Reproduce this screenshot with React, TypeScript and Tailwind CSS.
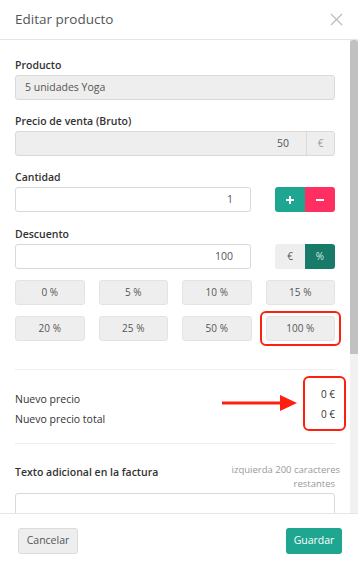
import React from 'react'

const presets = ['0 %', '5 %', '10 %', '15 %', '20 %', '25 %', '50 %', '100 %']

function Label({ children }: { children: React.ReactNode }) {
  return <label className="block text-[10.5px] leading-[16px] font-semibold text-[#333] mb-[2px]">{children}</label>
}

export default function App() {
  return (
    <div
      className="w-[358px] h-[568px] bg-white flex flex-col overflow-hidden text-[#555]"
      style={{ fontFamily: '"Open Sans", "Liberation Sans", sans-serif' }}
    >
      {/* Cabecera */}
      <div className="h-[40px] shrink-0 flex items-center justify-between pl-[15px] pr-[15px] border-b border-[#e5e5e5]">
        <h1 className="text-[13.5px] text-[#555] font-normal">Editar producto</h1>
        <svg width="13" height="13" viewBox="0 0 13 13" className="text-[#bbb]">
          <path d="M1 1 L12 12 M12 1 L1 12" stroke="currentColor" strokeWidth="1.2" fill="none" />
        </svg>
      </div>

      {/* Cuerpo con barra de scroll */}
      <div className="flex-1 flex min-h-0">
        <div className="flex-1 overflow-hidden px-[15px] pt-[17px]">
          <div className="mb-[13px]">
            <Label>Producto</Label>
            <div className="h-[25px] rounded-[3px] border border-[#d9d9d9] bg-[#eeeeee] flex items-center px-[9px] text-[10.5px] text-[#555]">
              5 unidades Yoga
            </div>
          </div>

          <div className="mb-[13px]">
            <Label>Precio de venta (Bruto)</Label>
            <div className="h-[25px] rounded-[3px] border border-[#d9d9d9] bg-[#eeeeee] flex text-[10.5px]">
              <div className="flex-1 flex items-center justify-end pr-[17px]">50</div>
              <div className="w-[28px] border-l border-[#d9d9d9] flex items-center justify-center text-[#999] text-[10px]">€</div>
            </div>
          </div>

          <div className="mb-[14px]">
            <Label>Cantidad</Label>
            <div className="flex items-center justify-between">
              <div className="w-[236px] h-[25px] rounded-[3px] border border-[#d9d9d9] bg-white flex items-center justify-end pr-[17px] text-[10.5px]">
                1
              </div>
              <div className="flex">
                <div className="w-[30px] h-[25px] bg-[#1fa690] rounded-l-[3px] flex items-center justify-center">
                  <svg width="10" height="10" viewBox="0 0 10 10"><path d="M5 1v8M1 5h8" stroke="white" strokeWidth="2" /></svg>
                </div>
                <div className="w-[30px] h-[25px] bg-[#ff2f62] rounded-r-[3px] flex items-center justify-center">
                  <svg width="10" height="10" viewBox="0 0 10 10"><path d="M1 5h8" stroke="white" strokeWidth="2" /></svg>
                </div>
              </div>
            </div>
          </div>

          <div>
            <Label>Descuento</Label>
            <div className="flex items-center justify-between">
              <div className="w-[236px] h-[25px] rounded-[3px] border border-[#d9d9d9] bg-white flex items-center justify-end pr-[17px] text-[10.5px]">
                100
              </div>
              <div className="flex text-[10px]">
                <div className="w-[30px] h-[25px] bg-[#eeeeee] rounded-l-[3px] flex items-center justify-center text-[#555]">€</div>
                <div className="w-[30px] h-[25px] bg-[#187a69] rounded-r-[3px] flex items-center justify-center text-[#cfe7e2]">%</div>
              </div>
            </div>
          </div>

          <div className="grid grid-cols-4 gap-x-[14px] gap-y-[11px] mt-[11px]">
            {presets.map((p) => (
              <div key={p} className="relative">
                <div className="h-[25px] rounded-[3px] border border-[#e3e3e3] bg-[#eeeeee] flex items-center justify-center text-[10px] text-[#555]">
                  {p}
                </div>
                {p === '100 %' && (
                  <div className="absolute -top-[5px] -bottom-[5px] -left-[6px] -right-[6px] border-[2.5px] border-[#ff1f0f] rounded-[6px]" />
                )}
              </div>
            ))}
          </div>

          <div className="border-t border-[#eeeeee] mt-[28px]" />

          {/* Resumen de precios */}
          <div className="relative flex justify-between pt-[16px] pb-[14px] text-[10.5px] text-[#333]">
            <div className="pt-[3px] leading-[20px]">
              <div>Nuevo precio</div>
              <div>Nuevo precio total</div>
            </div>
            <div className="leading-[20px] text-right text-[10px] -mt-[2px]">
              <div>0 €</div>
              <div>0 €</div>
            </div>
            <div className="absolute right-[-11px] top-[6px] w-[43px] h-[55px] border-[2.5px] border-[#ff1f0f] rounded-[6px]" />
            <svg className="absolute left-[207px] top-[24px]" width="76" height="18" viewBox="0 0 76 18">
              <path d="M0 9 H60" stroke="#ff1f0f" strokeWidth="3" />
              <path d="M58 1 L75 9 L58 17 Z" fill="#ff1f0f" />
            </svg>
          </div>

          <div className="border-t border-[#eeeeee]" />

          <div className="flex justify-between items-start pt-[19px]">
            <div className="text-[10.5px] font-semibold text-[#333] leading-[16px] pt-[1px]">Texto adicional en la factura</div>
            <div className="text-[9.5px] text-[#999] text-right leading-[14px] -mr-[5px]">
              <div>izquierda 200 caracteres</div>
              <div className="pr-[5px]">restantes</div>
            </div>
          </div>
          <div className="mt-[2px] h-[40px] rounded-[3px] border border-[#d9d9d9]" />
        </div>

        {/* barra de scroll */}
        <div className="w-[8px] shrink-0 bg-[#f1f1f1] flex flex-col">
          <div className="h-[314px] bg-[#c1c1c1] rounded-t-[3px]" />
        </div>
      </div>

      {/* Pie */}
      <div className="h-[55px] shrink-0 border-t border-[#e5e5e5] flex items-center justify-between pl-[18px] pr-[16px]">
        <button className="h-[26px] w-[60px] rounded-[3px] border border-[#dcdcdc] bg-[#eeeeee] text-[10.5px] text-[#555]">
          Cancelar
        </button>
        <button className="h-[26px] w-[56px] rounded-[3px] bg-[#1fa690] text-[10.5px] text-white">Guardar</button>
      </div>
    </div>
  )
}
